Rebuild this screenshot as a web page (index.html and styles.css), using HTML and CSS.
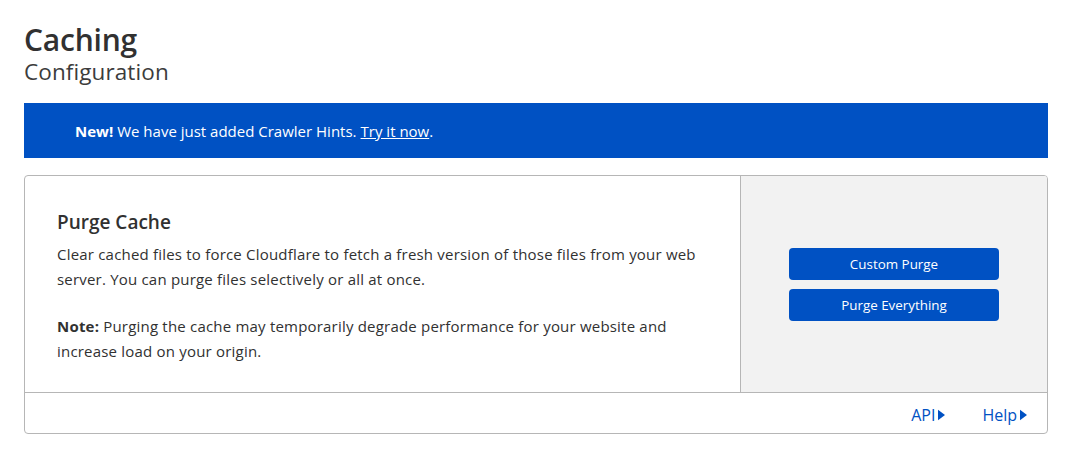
FILE: index.html
```html
<!DOCTYPE html>
<html>
<head>
<meta charset="utf-8">
<link rel="stylesheet" href="styles.css">
</head>
<body>
<div class="page">
  <header class="header">
    <h1 class="title">Caching</h1>
    <div class="subtitle">Configuration</div>
  </header>
  <div class="banner"><b>New!</b> We have just added Crawler Hints. <a class="banner-link" href="#">Try it now</a>.</div>
  <section class="card">
    <div class="card-main">
      <div class="card-body">
        <h2 class="card-title">Purge Cache</h2>
        <p class="card-text">Clear cached files to force Cloudflare to fetch a fresh version of those files from your web server. You can purge files selectively or all at once.</p>
        <p class="card-text"><b>Note:</b> Purging the cache may temporarily degrade performance for your website and increase load on your origin.</p>
      </div>
      <div class="card-side">
        <button class="btn">Custom Purge</button>
        <button class="btn">Purge Everything</button>
      </div>
    </div>
    <div class="card-footer">
      <a class="foot-link" href="#">API<svg class="tri" viewBox="0 0 8 12" width="7" height="12"><path d="M0 0 L8 6 L0 12 Z" fill="#0051c3"/></svg></a>
      <a class="foot-link" href="#">Help<svg class="tri" viewBox="0 0 8 12" width="7" height="12"><path d="M0 0 L8 6 L0 12 Z" fill="#0051c3"/></svg></a>
    </div>
  </section>
</div>
</body>
</html>
```
FILE: styles.css
```css
* { box-sizing: border-box; }
html, body { margin: 0; padding: 0; background: #fff; }
body { font-family: "Open Sans", "Noto Sans", sans-serif; color: #313131; }
.page { padding: 22px 24px 0 24px; }
.header { margin-bottom: 17px; }
.title { margin: 0; font-size: 30px; font-weight: 600; line-height: 36px; color: #313131; letter-spacing: -0.2px; }
.subtitle { font-size: 22.5px; line-height: 28px; color: #3c3c3c; letter-spacing: 0.1px; }
.banner { background: #0051c3; color: #fff; height: 55px; display: flex; align-items: center; padding-left: 51px; font-size: 15px; }
.banner b { font-weight: 700; margin-right: 4px; }
.banner-link { color: #fff; text-decoration: underline; margin-left: 4px; }
.card { margin-top: 17px; border: 1px solid #b6b6b6; border-radius: 4px; overflow: hidden; }
.card-main { display: flex; height: 217px; border-bottom: 1px solid #b6b6b6; }
.card-body { flex: 0 0 715px; padding: 33px 32px 0 32px; }
.card-title { margin: 0 0 7px 0; font-size: 19px; font-weight: 600; line-height: 26px; color: #313131; }
.card-text { margin: 0 0 22px 0; font-size: 15px; line-height: 25px; color: #313131; letter-spacing: 0.2px; }
.card-side { flex: 1; background: #f2f2f2; border-left: 1px solid #b6b6b6; display: flex; flex-direction: column; align-items: center; justify-content: center; gap: 9px; padding-top: 1px; }
.btn { width: 210px; height: 32px; background: #0051c3; color: #fff; border: none; border-radius: 4px; font-family: "Open Sans", "Noto Sans", sans-serif; font-size: 13.4px; }
.card-footer { height: 40px; display: flex; justify-content: flex-end; align-items: center; gap: 37px; padding-right: 20px; padding-top: 4px; }
.foot-link { color: #0051c3; text-decoration: none; font-size: 16px; display: flex; align-items: center; gap: 3px; }
.tri { display: block; }
```
